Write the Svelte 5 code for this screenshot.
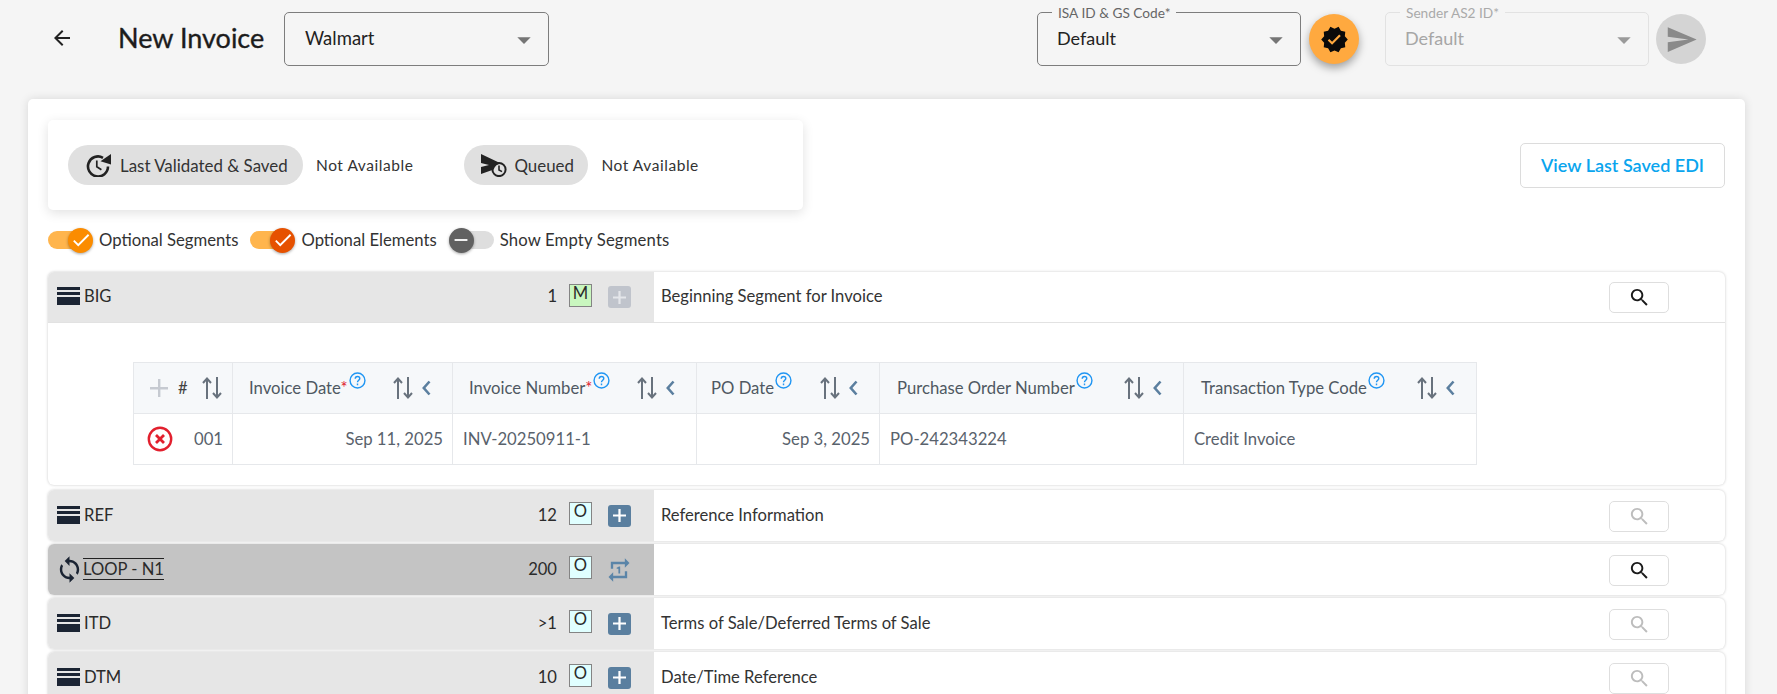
<script>
  const columns = [
    { label: 'Invoice Date', req: true, value: 'Sep 11, 2025', right: true, width: 220, pad: 16 },
    { label: 'Invoice Number', req: true, value: 'INV-20250911-1', right: false, width: 244, pad: 16 },
    { label: 'PO Date', req: false, value: 'Sep 3, 2025', right: true, width: 183, pad: 14 },
    { label: 'Purchase Order Number', req: false, value: 'PO-242343224', right: false, width: 304, pad: 17 },
    { label: 'Transaction Type Code', req: false, value: 'Credit Invoice', right: false, width: 293, pad: 17 }
  ];
  const rows = [
    { code: 'REF', count: '12', desc: 'Reference Information' },
    { code: 'LOOP - N1', count: '200', desc: '', loop: true },
    { code: 'ITD', count: '>1', desc: 'Terms of Sale/Deferred Terms of Sale' },
    { code: 'DTM', count: '10', desc: 'Date/Time Reference' }
  ];
  const searchPath = 'M15.5 14h-.79l-.28-.27C15.41 12.59 16 11.11 16 9.5 16 5.91 13.09 3 9.5 3S3 5.91 3 9.5 5.91 16 9.5 16c1.61 0 3.09-.59 4.23-1.57l.27.28v.79l5 4.99L20.49 19l-4.99-5zm-6 0C7.01 14 5 11.99 5 9.5S7.01 5 9.5 5 14 7.01 14 9.5 11.99 14 9.5 14z';
</script>

{#snippet caret()}
  <svg class="caret" viewBox="0 0 24 24"><path d="M7 10l5 5 5-5z" /></svg>
{/snippet}

{#snippet sort()}
  <svg class="sort" viewBox="0 0 20 22" fill="none" stroke="#68727d" stroke-width="2">
    <path d="M5 22V2M1 6l4-4.5L9 6" />
    <path d="M15 0v20M11 16l4 4.5 4-4.5" />
  </svg>
{/snippet}

{#snippet chevron()}
  <svg class="chev" viewBox="0 0 9 16" fill="none" stroke="#5b7f9f" stroke-width="2.6"><path d="M7.5 1.5L1.8 8l5.7 6.5" /></svg>
{/snippet}

{#snippet help()}
  <svg class="help" viewBox="0 0 24 24" fill="none" stroke="#2196f3" stroke-width="2">
    <circle cx="12" cy="12" r="10.5" />
    <path d="M8.8 9.5c0-1.9 1.4-3.2 3.2-3.2s3.2 1.2 3.2 2.9c0 2.4-3.2 2.6-3.2 5.3" />
    <path d="M12 16.4v2.2" />
  </svg>
{/snippet}

{#snippet bars()}
  <svg class="bars" viewBox="0 0 23 18"><path fill="#1b2433" d="M0 0h23v3H0zM0 5h23v3H0zM0 10h23v8H0z" /></svg>
{/snippet}

{#snippet search(on)}
  <button class="search" class:off={!on}>
    <svg viewBox="0 0 24 24"><path d={searchPath} /></svg>
  </button>
{/snippet}

{#snippet plus(dis)}
  <span class="plus" class:dis>
    <svg viewBox="0 0 14 14"><path d="M5.8 0h2.4v5.8H14v2.4H8.2V14H5.8V8.2H0V5.8h5.8z" /></svg>
  </span>
{/snippet}

<div class="page">
  <header class="top">
    <svg class="back" viewBox="0 0 24 24"><path d="M20 11H7.83l5.59-5.59L12 4l-8 8 8 8 1.41-1.41L7.83 13H20v-2z" /></svg>
    <h1>New Invoice</h1>
    <div class="select customer"><span>Walmart</span>{@render caret()}</div>

    <div class="right">
      <div class="select labelled">
        <span class="legend">ISA ID &amp; GS Code*</span>
        <span>Default</span>{@render caret()}
      </div>
      <button class="round validate">
        <svg viewBox="0 0 24 24"><path fill-rule="evenodd" d="M23 12l-2.44-2.78.34-3.68-3.61-.82-1.89-3.18L12 3 8.6 1.54 6.71 4.72l-3.61.81.34 3.68L1 12l2.44 2.78-.34 3.69 3.61.82 1.89 3.18L12 21l3.4 1.46 1.89-3.18 3.61-.82-.34-3.68L23 12zm-13 4.4l-3.6-3.6 1.3-1.3 2.3 2.3 5.9-5.9 1.3 1.3-7.2 7.2z" /></svg>
      </button>
      <div class="select labelled disabled">
        <span class="legend">Sender AS2 ID*</span>
        <span>Default</span>{@render caret()}
      </div>
      <button class="round send">
        <svg viewBox="0 0 24 24"><path d="M2.01 21L23 12 2.01 3 2 10l15 2-15 2z" /></svg>
      </button>
    </div>
  </header>

  <main class="card">
    <div class="info-row">
      <div class="info">
        <div class="chip first">
          <svg class="history" viewBox="0 0 26 24" fill="none" stroke="#222">
            <path stroke-width="2.6" d="M22 13.5A10 10 0 1 1 17 4.8" />
            <path fill="#222" stroke="none" d="M14.5 8.2L25 1v10.5z" />
            <path stroke-width="1.7" d="M10.8 7.5v6.2l4.6 3" />
          </svg>
          <span>Last Validated &amp; Saved</span>
        </div>
        <span class="na">Not Available</span>
        <div class="chip second">
          <svg class="queued" viewBox="0 0 28 24">
            <path fill="#222" d="M1 1l20 9.5c-4 .6-6.5 3-7.3 6L1 21v-7l8-2-8-2z" />
            <circle cx="19" cy="16.5" r="6.6" fill="none" stroke="#222" stroke-width="2" />
            <path fill="none" stroke="#222" stroke-width="1.6" d="M19 12.5v4.5l3 1.6" />
          </svg>
          <span>Queued</span>
        </div>
        <span class="na">Not Available</span>
      </div>
      <button class="edi">View Last Saved EDI</button>
    </div>

    <div class="toggles">
      <div class="toggle on">
        <span class="track"><span class="thumb orange"><svg viewBox="0 0 24 24"><path d="M9 16.17L4.83 12l-1.42 1.41L9 19 21 7l-1.41-1.41z" /></svg></span></span>
        <span>Optional Segments</span>
      </div>
      <div class="toggle on">
        <span class="track"><span class="thumb deep"><svg viewBox="0 0 24 24"><path d="M9 16.17L4.83 12l-1.42 1.41L9 19 21 7l-1.41-1.41z" /></svg></span></span>
        <span>Optional Elements</span>
      </div>
      <div class="toggle empty">
        <span class="track"><span class="thumb grey"><svg viewBox="0 0 24 24"><path d="M19 13H5v-2h14v2z" /></svg></span></span>
        <span>Show Empty Segments</span>
      </div>
    </div>

    <section class="seg expanded">
      <div class="seg-head">
        <div class="seg-left">
          {@render bars()}
          <span class="code">BIG</span>
          <span class="count">1</span>
          <span class="badge mand">M</span>
          {@render plus(true)}
        </div>
        <div class="seg-right">
          <span class="desc">Beginning Segment for Invoice</span>
          {@render search(true)}
        </div>
      </div>
      <div class="panel">
        <table>
          <colgroup>
            <col style="width:99px" />
            {#each columns as c}<col style="width:{c.width}px" />{/each}
          </colgroup>
          <thead>
            <tr>
              <th class="idx-h">
                <div class="idx-head">
                  <svg class="add" viewBox="0 0 18 18"><path fill="#c6cad1" d="M8 0h2.4v8H18v2.4h-7.6V18H8v-7.6H0V8h8z" /></svg>
                  <span class="hash">#</span>
                  {@render sort()}
                </div>
              </th>
              {#each columns as c}
                <th>
                  <div class="th-in" style="padding-left:{c.pad}px">
                    <span class="lbl">{c.label}{#if c.req}<em>*</em>{/if}</span>{@render help()}
                    <span class="th-end">{@render sort()}{@render chevron()}</span>
                  </div>
                </th>
              {/each}
            </tr>
          </thead>
          <tbody>
            <tr>
              <td>
                <div class="idx-cell">
                  <svg class="del" viewBox="0 0 26 26" fill="none" stroke="#e2202e"><circle cx="13" cy="13" r="11.2" stroke-width="2.4" /><path stroke-width="2.8" d="M9 9l8 8M17 9l-8 8" /></svg>
                  <span>001</span>
                </div>
              </td>
              {#each columns as c}
                <td class:r={c.right}>{c.value}</td>
              {/each}
            </tr>
          </tbody>
        </table>
      </div>
    </section>

    {#each rows as row}
      <section class="seg" class:loop={row.loop}>
        <div class="seg-head">
          <div class="seg-left">
            {#if row.loop}
              <svg class="sync" viewBox="0 0 24 24"><path fill="#1b2433" d="M12 4V1L8 5l4 4V6c3.31 0 6 2.69 6 6 0 1.01-.25 1.97-.7 2.8l1.46 1.46C19.54 15.03 20 13.57 20 12c0-4.42-3.58-8-8-8zm0 14c-3.31 0-6-2.69-6-6 0-1.01.25-1.97.7-2.8L5.24 7.74C4.46 8.97 4 10.43 4 12c0 4.42 3.58 8 8 8v3l4-4-4-4v3z" /></svg>
              <span class="code lined">{row.code}</span>
            {:else}
              {@render bars()}
              <span class="code">{row.code}</span>
            {/if}
            <span class="count">{row.count}</span>
            <span class="badge opt">O</span>
            {#if row.loop}
              <svg class="repeat" viewBox="0 0 24 24"><path fill="#5b85a8" d="M7 7h10v3l4-4-4-4v3H5v6h2V7zm10 10H7v-3l-4 4 4 4v-3h12v-6h-2v4zm-4-2V9h-1l-2 1v1h1.5v4H13z" /></svg>
            {:else}
              {@render plus(false)}
            {/if}
          </div>
          <div class="seg-right">
            <span class="desc">{row.desc}</span>
            {@render search(row.loop)}
          </div>
        </div>
      </section>
    {/each}
  </main>
</div>

<style>
  :global(html), :global(body) { margin: 0; height: 694px; overflow: hidden; background: #f5f5f5; }
  .page { font-family: "Lato", "Noto Sans", sans-serif; color: #2b2b2b; width: 1777px; height: 694px; overflow: hidden; }

  .top { display: flex; align-items: flex-start; height: 87px; padding: 12px 71px 0 50px; box-sizing: border-box; }
  .back { width: 24px; height: 24px; margin-top: 14px; fill: #222; flex: none; }
  h1 { margin: 0 20px 0 44px; font-size: 27px; line-height: 52px; font-weight: 400; -webkit-text-stroke: .35px #1c1c1c; color: #1c1c1c; white-space: nowrap; width: 146px; }

  .select { position: relative; box-sizing: border-box; height: 54px; border: 1px solid #7d7d7d; border-radius: 5px; display: flex; align-items: center; justify-content: space-between; padding: 0 8px 2px 20px; font-size: 18px; color: #222; width: 264px; }
  .customer { width: 265px; font-size: 18.5px; }
  .caret { width: 32px; height: 32px; fill: #757575; margin-top: 3px; }
  .labelled { padding-left: 19px; }
  .legend { position: absolute; left: 14px; top: -8px; padding: 0 6px; background: #f5f5f5; font-size: 13.7px; line-height: 15px; color: #666; }
  .disabled { border-color: #e2e2e2; color: #a6a6a6; }
  .disabled .legend { color: #aaa; }
  .disabled .caret { fill: #9a9a9a; }
  .right { margin-left: auto; display: flex; gap: 0; }
  .round { width: 50px; height: 50px; border: 0; border-radius: 50%; padding: 0; margin-top: 2px; display: flex; align-items: center; justify-content: center; flex: none; }
  .validate { background: #ffa93f; box-shadow: 0 4px 8px rgba(0,0,0,.35); margin: 2px 26px 0 8px; }
  .validate svg { width: 29px; height: 29px; fill: #0a0a0a; }
  .send { background: #d4d4d4; margin-left: 7px; }
  .send svg { width: 33px; height: 33px; fill: #8a8a8a; }

  .card { box-sizing: border-box; margin: 12px 32px 0 28px; height: 620px; background: #fff; border-radius: 5px; padding: 21px 20px 0 20px; box-shadow: 0 0 10px rgba(0,0,0,.12); }
  .info-row { display: flex; align-items: center; justify-content: space-between; }
  .info { box-sizing: border-box; width: 755px; height: 90px; background: #fff; border-radius: 5px; box-shadow: 0 3px 12px rgba(0,0,0,.12); display: flex; align-items: center; padding-left: 20px; }
  .chip { display: flex; align-items: center; height: 40px; border-radius: 20px; background: #e0e0e0; font-size: 16.9px; color: #333; }
  .chip.first { width: 235px; padding-left: 18px; box-sizing: border-box; gap: 8px; }
  .chip.second { width: 124px; padding-left: 16px; box-sizing: border-box; gap: 6px; margin-left: 51px; }
  .history { width: 26px; height: 24px; flex: none; }
  .queued { width: 28px; height: 24px; flex: none; }
  .na { font-size: 15.5px; margin-left: 13px; color: #333; letter-spacing: .55px; white-space: nowrap; }
  .edi { box-sizing: border-box; width: 205px; height: 45px; padding: 0; background: #fff; border: 1px solid #dcdcdc; border-radius: 5px; font: 600 18px "Lato", sans-serif; color: #0aa5ee; }

  .toggles { display: flex; gap: 12px; margin: 18px 0 20px; height: 24px; align-items: center; }
  .toggle { display: flex; align-items: center; gap: 9px; font-size: 16.7px; color: #333; }
  .toggle.empty { gap: 6px; letter-spacing: .15px; }
  .track { position: relative; display: block; width: 42px; height: 18px; border-radius: 9px; background: #ffb54d; flex: none; }
  .empty .track { width: 45px; background: #dedede; }
  .thumb { position: absolute; top: -3.5px; right: -3px; width: 25px; height: 25px; border-radius: 50%; display: flex; align-items: center; justify-content: center; box-shadow: 0 1px 3px rgba(0,0,0,.35); }
  .empty .thumb { left: 0; right: auto; }
  .thumb svg { width: 22px; height: 22px; fill: #fff; }
  .orange { background: #fb8c00; }
  .deep { background: #e65100; }
  .grey { background: #616161; }

  .seg { width: 1677px; border-radius: 6px; background: #fff; box-shadow: 0 0 3px rgba(0,0,0,.22); margin-bottom: 3px; overflow: hidden; }
  .seg.expanded { margin-bottom: 5px; }
  .seg-head { display: flex; height: 51px; box-sizing: border-box; }
  .expanded .seg-head { border-bottom: 1px solid #e2e2e2; }
  .seg-left { box-sizing: border-box; width: 606px; flex: none; background: #e6e6e6; display: flex; align-items: center; padding: 0 23px 0 9px; }
  .loop .seg-left { background: #c4c4c4; }
  .bars { width: 23px; height: 18px; flex: none; margin-right: 4px; margin-top: -2px; }
  .sync { width: 29px; height: 29px; flex: none; margin: 0 -.5px 0 -2.5px; }
  .code { font-size: 16.6px; color: #2b2b2b; margin-top: -2px; }
  .lined { border-top: 1px solid #222; border-bottom: 1px solid #222; line-height: 20px; }
  .count { margin-left: auto; font-size: 16.6px; margin-right: 12px; margin-top: -2px; }
  .badge { box-sizing: border-box; width: 23px; height: 23px; border: 1.5px solid #848484; font-size: 16.6px; line-height: 17px; text-align: center; margin-right: 16px; margin-top: -4px; }
  .mand { background: #c9f7bf; }
  .opt { background: #e0ffff; }
  .plus { box-sizing: border-box; width: 23px; height: 22px; border-radius: 3px; background: #5a7f9f; display: flex; align-items: center; justify-content: center; }
  .plus svg { width: 13px; height: 13px; fill: #fff; }
  .plus.dis { background: #c0c4cc; }
  .plus.dis svg { fill: #e4e6ea; }
  .repeat { width: 28px; height: 28px; margin: 0 -2px 0 -3px; flex: none; }
  .seg-right { flex: 1; display: flex; align-items: center; justify-content: space-between; padding: 0 56px 0 7px; min-width: 0; }
  .desc { font-size: 16.6px; color: #333; margin-top: -2px; }
  .search { box-sizing: border-box; width: 60px; height: 31px; padding: 0; background: #fff; border: 1px solid #dedede; border-radius: 5px; display: flex; align-items: center; justify-content: center; margin-top: 1px; }
  .search svg { width: 23px; height: 23px; fill: #1a1a1a; }
  .search.off svg { fill: #bdbdbd; }

  .panel { padding: 39px 0 20px 85px; }
  table { border-collapse: collapse; table-layout: fixed; width: 1343px; font-size: 16.7px; color: #59626c; }
  th, td { border: 1px solid #e6e8eb; height: 51px; padding: 0; box-sizing: border-box; font-weight: 400; }
  th { background: #f6f8fa; text-align: left; }
  .th-in { display: flex; align-items: center; padding-right: 21px; color: #4f5862; }
  em { color: #e0202e; font-style: normal; }
  .help { width: 17px; height: 17px; margin-left: 1px; margin-top: -15px; flex: none; }
  .lbl { white-space: nowrap; }
  .th-end { margin-left: auto; display: flex; align-items: center; gap: 9px; }
  .sort { width: 20px; height: 22px; flex: none; }
  .chev { width: 9px; height: 16px; flex: none; }
  .idx-head { display: flex; align-items: center; padding: 0 10px 0 16px; }
  .add { width: 18px; height: 18px; flex: none; }
  .hash { margin-left: 10px; font-size: 16.5px; color: #444; }
  .idx-head .sort { margin-left: auto; }
  .idx-cell { display: flex; align-items: center; justify-content: space-between; padding: 0 9px 0 13px; }
  .del { width: 26px; height: 26px; }
  td { padding: 0 10px; }
  td:first-child { padding: 0; }
  td.r { text-align: right; padding-right: 9px; }
</style>
